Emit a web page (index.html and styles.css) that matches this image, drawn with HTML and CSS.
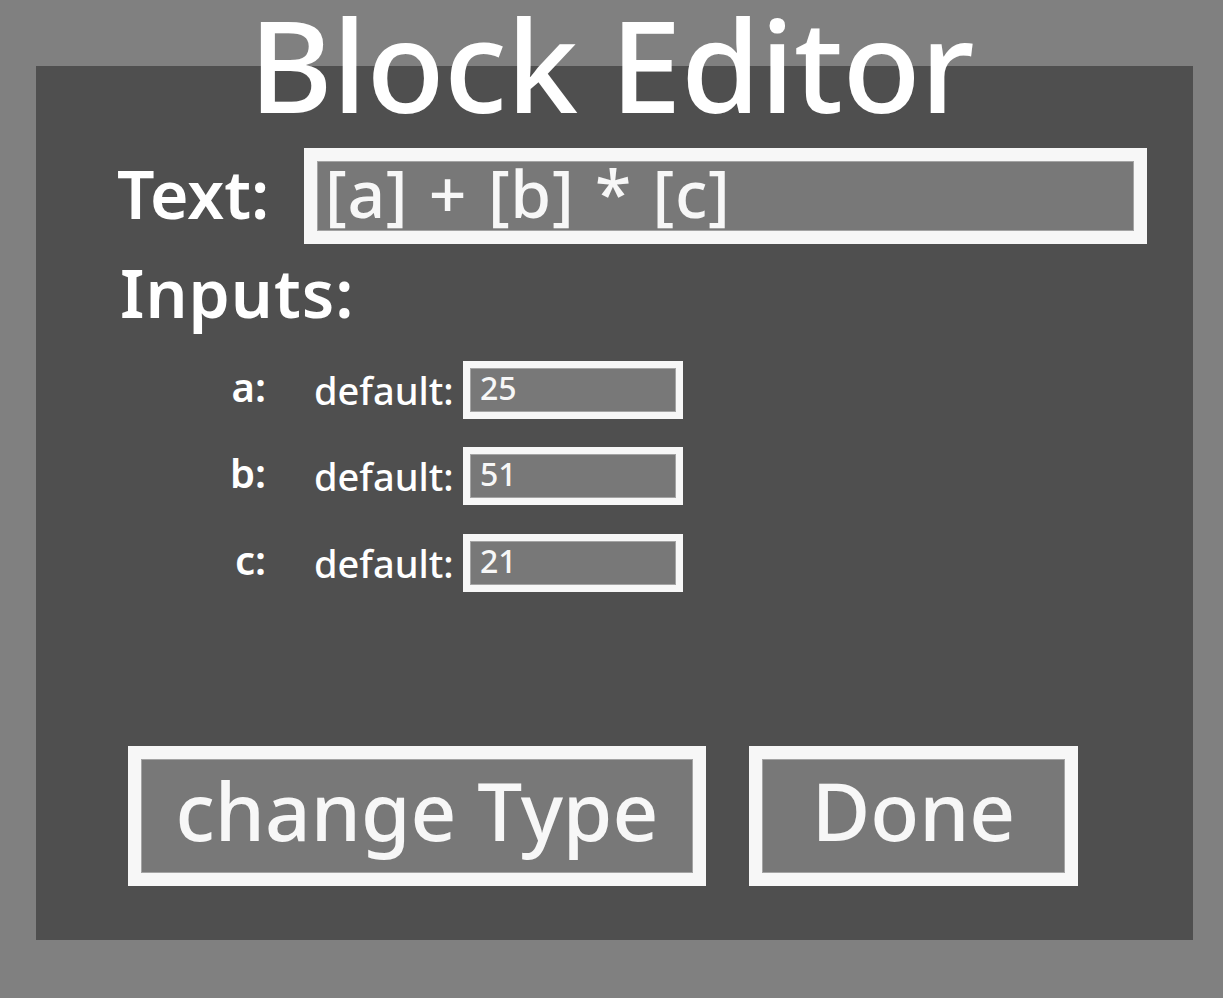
FILE: index.html
```html
<!DOCTYPE html>
<html lang="en">
<head>
<meta charset="utf-8">
<title>Block Editor</title>
<link rel="stylesheet" href="styles.css">
</head>
<body>
<main class="panel">
  <h1 class="title">Block Editor</h1>
  <div class="text-row">
    <span class="text-label">Text:</span>
    <div class="text-field">[a] + [b] * [c]</div>
  </div>
  <h2 class="inputs-title">Inputs:</h2>
  <div class="inputs">
    <div class="input-row">
      <span class="input-name">a:</span>
      <span class="input-default">default:</span>
      <div class="value-field">25</div>
    </div>
    <div class="input-row">
      <span class="input-name">b:</span>
      <span class="input-default">default:</span>
      <div class="value-field">51</div>
    </div>
    <div class="input-row">
      <span class="input-name">c:</span>
      <span class="input-default">default:</span>
      <div class="value-field">21</div>
    </div>
  </div>
  <div class="buttons">
    <button class="btn btn-type">change Type</button>
    <button class="btn btn-done">Done</button>
  </div>
</main>
</body>
</html>
```

FILE: styles.css
```css
html, body {
  margin: 0;
  padding: 0;
}

body {
  background: #808080;
  width: 1223px;
  height: 998px;
  overflow: hidden;
  font-family: "Noto Sans", "Open Sans", sans-serif;
  color: #ffffff;
}

.panel {
  display: flex;
  flex-direction: column;
  box-sizing: border-box;
  margin: 66px 0 0 36px;
  width: 1157px;
  height: 874px;
  padding-bottom: 54px;
  background: #4f4f4f;
}

.title {
  margin: -66px 0 0;
  padding-right: 6px;
  height: 128px;
  font-size: 128px;
  line-height: 128px;
  font-weight: 500;
  letter-spacing: -0.5px;
  text-align: center;
  white-space: nowrap;
}

.text-row {
  display: flex;
  align-items: flex-start;
  margin-top: 20px;
  padding-left: 81px;
}

.text-label {
  flex: 0 0 187px;
  font-size: 66px;
  line-height: 91px;
  font-weight: 600;
}

.text-field {
  box-sizing: border-box;
  width: 843px;
  height: 96px;
  border: 13px solid #f7f7f7;
  background: #787878;
  box-shadow: inset 0 0 0 1px #a4a4a4;
  padding-left: 8px;
  font-size: 66px;
  line-height: 63px;
  font-weight: 550;
  letter-spacing: 0.6px;
  word-spacing: 3px;
  color: #f7f7f7;
  white-space: nowrap;
  overflow: hidden;
}

.inputs-title {
  margin: 15px 0 0;
  padding-left: 84px;
  font-size: 66px;
  line-height: 66px;
  font-weight: 600;
  letter-spacing: 1px;
}

.inputs {
  display: flex;
  flex-direction: column;
  gap: 28.5px;
  margin-top: 35.6px;
}

.input-row {
  display: flex;
  align-items: flex-start;
  height: 58px;
}

.input-name {
  flex: 0 0 230px;
  text-align: right;
  font-size: 40px;
  line-height: 51px;
  font-weight: 600;
}

.input-default {
  flex: 0 0 149px;
  margin-left: 48px;
  font-size: 38px;
  line-height: 58px;
  font-weight: 500;
  white-space: nowrap;
}

.value-field {
  box-sizing: border-box;
  width: 220px;
  height: 58px;
  border: 7px solid #f7f7f7;
  background: #787878;
  box-shadow: inset 0 0 0 1px #a4a4a4;
  padding-left: 10px;
  font-size: 32px;
  line-height: 39px;
  font-weight: 500;
  color: #f7f7f7;
}

.buttons {
  display: flex;
  gap: 43px;
  margin-top: auto;
  padding-left: 92px;
}

.btn {
  box-sizing: border-box;
  height: 140px;
  margin: 0;
  padding: 0;
  border: 13px solid #f7f7f7;
  background: #787878;
  box-shadow: inset 0 0 0 1px #a4a4a4;
  font-family: "Noto Sans", "Open Sans", sans-serif;
  font-size: 80px;
  line-height: 102px;
  font-weight: 500;
  color: #f7f7f7;
  text-align: center;
  white-space: nowrap;
  display: flex;
  justify-content: center;
  align-items: flex-start;
}

.btn-type {
  width: 578px;
}

.btn-done {
  width: 329px;
}
```
